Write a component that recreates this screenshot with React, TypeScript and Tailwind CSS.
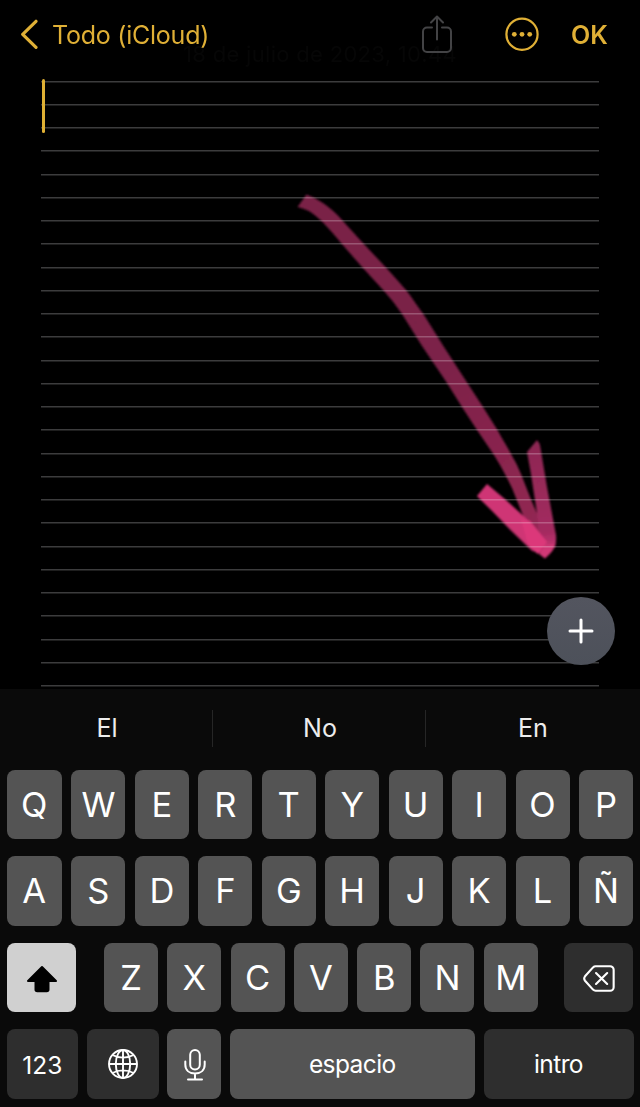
import React from "react";
import clsx from "clsx";

const ruledLines = Array.from({ length: 27 });
const topRow = ["Q", "W", "E", "R", "T", "Y", "U", "I", "O", "P"];
const middleRow = ["A", "S", "D", "F", "G", "H", "J", "K", "L", "Ñ"];
const bottomRow = ["Z", "X", "C", "V", "B", "N", "M"];

const ShareIcon = () => (
  <svg width="30" height="38" viewBox="0 0 30 38" fill="none" stroke="#434345" strokeWidth="2" strokeLinecap="round" strokeLinejoin="round">
    <path d="M10 12.500H5A4 4 0 0 0 1 16.500V33A4 4 0 0 0 5 37H25A4 4 0 0 0 29 33V16.500A4 4 0 0 0 25 12.500H20" />
    <path d="M15 24.500V2M9 7.500L15 1.500L21 7.500" />
  </svg>
);

const MoreIcon = () => (
  <svg width="34" height="34" viewBox="0 0 34 34" fill="none">
    <circle cx="17" cy="17.300" r="15.600" stroke="#e0b036" strokeWidth="2.200" />
    <g fill="#e0b036">
      <circle cx="9.300" cy="17.300" r="2.400" />
      <circle cx="17" cy="17.300" r="2.400" />
      <circle cx="24.700" cy="17.300" r="2.400" />
    </g>
  </svg>
);

const GlobeIcon = () => (
  <svg width="30" height="30" viewBox="0 0 30 30" fill="none" stroke="#fff" strokeWidth="1.900">
    <circle cx="15" cy="15" r="14" />
    <ellipse cx="15" cy="15" rx="7.200" ry="14" />
    <path d="M15 1V29M1 15H29M4.500 6C10.500 9.500 19.500 9.500 25.500 6M4.500 24C10.500 20.500 19.500 20.500 25.500 24" />
  </svg>
);

const MicIcon = () => (
  <svg width="22" height="32" viewBox="0 0 22 32" fill="none" stroke="#fff" strokeWidth="2" strokeLinecap="round">
    <rect x="6.200" y="1" width="9.600" height="19.500" rx="4.800" />
    <path d="M1.300 12.500V15.500C1.300 21 5 24.500 11 24.500S20.700 21 20.700 15.500V12.500M11 24.500V30.500M4 30.500H18" />
  </svg>
);

const DeleteIcon = () => (
  <svg width="32" height="27" viewBox="0 0 33 28" fill="none" stroke="#fff" strokeWidth="2.200" strokeLinecap="round" strokeLinejoin="round">
    <path d="M13 1.300H28A3.700 3.700 0 0 1 31.700 5V23A3.700 3.700 0 0 1 28 26.700H13Q11.500 26.700 10.300 25.500L2 16.300Q0.300 14 2 11.700L10.300 2.500Q11.500 1.300 13 1.300Z" />
    <path d="M13.400 8.300L25 19.700M25 8.300L13.400 19.700" />
  </svg>
);

const ShiftIcon = () => (
  <svg width="32" height="28" viewBox="0 0 32 28">
    <path
      d="M16 2L30 16H22.500V24.500Q22.500 26.200 20.800 26.200H11.200Q9.500 26.200 9.500 24.500V16H2Z"
      fill="#000"
      stroke="#000"
      strokeWidth="2"
      strokeLinejoin="round"
    />
  </svg>
);

// marker strokes, each one overlaps the previous near the tip
const MarkerArrow = () => (
  <svg className="pointer-events-none absolute left-0 top-0 mix-blend-screen" width="640" height="689" viewBox="0 0 640 689">
    <defs>
      <linearGradient id="shaft" x1="300" y1="200" x2="540" y2="540" gradientUnits="userSpaceOnUse">
        <stop offset="0" stopColor="#7a2046" />
        <stop offset="0.500" stopColor="#7b2048" />
        <stop offset="1" stopColor="#942853" />
      </linearGradient>
      <linearGradient id="barb" x1="535" y1="442" x2="548" y2="555" gradientUnits="userSpaceOnUse">
        <stop offset="0" stopColor="#8c2752" />
        <stop offset="0.800" stopColor="#a42b60" />
        <stop offset="1" stopColor="#d2367a" />
      </linearGradient>
      <filter id="soft">
        <feGaussianBlur stdDeviation="0.900" />
      </filter>
    </defs>
    <g filter="url(#soft)">
      <path
        d="M297.500 207L306.500 194.500Q315 197.500 323 203C330 208 336 213 342 220L362 242L385 266.500C393 275 399 282 406 290C413 299 418 307 424 315L444 347L468 384L483 407L498 431C502 439 507 446 511 454Q517 464 521 474L530 497L542 525L547 545L537 545L522 513L516 498Q512 487 507 478Q501 466 494 455L477 430L462 407L447 383L422 346L402 314Q394 302 384 291L362 267L341 243C333 233 325 224 317 217Q308 209 297.500 207Z"
        fill="url(#shaft)"
      />
      <path
        d="M527 452L537 440Q540 443 540.500 448L547 487L556 535Q556.500 542 555 547L545 558L540 554L538 520L531 474Z"
        fill="url(#barb)"
      />
      <path d="M477 496L495 502L545 548L540 553L532 551L510 530L492 511Z" fill="#9c2b5b" />
      <path d="M477 496L487 484L506 500L529 521L547 542L538 554L526 544L509 527Z" fill="#cf3474" />
      <path d="M521 520L530 521L547 542L538 554L528 545Z" fill="#dc397a" />
      <path d="M545 545L555 544Q555 550 545 558.500L539 554Z" fill="#d03876" />
    </g>
  </svg>
);

type KeyProps = {
  children: React.ReactNode;
  className?: string;
};

const Key = ({ children, className }: KeyProps) => (
  <button
    className={clsx(
      "flex h-[69.5px] shrink-0 items-center justify-center rounded-lg font-normal text-white",
      className
    )}
  >
    {children}
  </button>
);

const LetterKey = ({ letter, wide }: { letter: string; wide?: boolean }) => (
  <Key className={clsx("bg-[#545454] text-[34.5px]", wide ? "w-[55.5px]" : "w-[54px]")}>
    <span>{letter}</span>
  </Key>
);

const App = () => {
  return (
    <div className="relative flex h-[1107px] w-[640px] flex-col overflow-hidden bg-black font-['Inter',sans-serif]">
      <section className="relative isolate h-[689px] shrink-0">
        <header className="flex h-[68px] items-center pl-5 pr-8 text-[#e0b036]">
          <svg width="19" height="30" viewBox="0 0 19 30" fill="none" stroke="currentColor" strokeWidth="3.200" strokeLinecap="round" strokeLinejoin="round">
            <path d="M16 2.300L2.700 15.300L16 28.300" />
          </svg>
          <h1 className="ml-[13px] whitespace-nowrap pt-0.5 text-[25px] leading-none tracking-[-0.24px]">Todo (iCloud)</h1>
          <div className="ml-auto flex items-center">
            <ShareIcon />
            <div className="ml-[53px]">
              <MoreIcon />
            </div>
            <button className="ml-8 w-[37px] pt-0.5 text-[25px] font-semibold leading-none">OK</button>
          </div>
        </header>
        <p className="absolute left-0 top-[42px] -z-10 w-full text-center text-[22px] leading-6 tracking-[0.3px] text-[#060606]">
          18 de julio de 2023, 10:44
        </p>
        <div className="ml-[41px] mt-[12.5px] w-[557.5px]">
          {ruledLines.map((_, i) => (
            <div key={i} className="h-[23.25px]">
              <svg className="block" width="558" height="3" viewBox="0 0 558 3">
                <rect width="558" height="1.500" fill="#3c3c3d" />
              </svg>
            </div>
          ))}
        </div>
        <div className="absolute left-[42px] top-[79px] h-[54px] w-[3px] rounded-full bg-[#dfb034]" />
        <MarkerArrow />
        <button className="absolute left-[547px] top-[597px] flex size-[68px] items-center justify-center rounded-full bg-linear-to-b from-[#53555f] to-[#4d515a]">
          <svg width="26" height="26" viewBox="0 0 26 26" stroke="#fff" strokeWidth="3" strokeLinecap="round">
            <path d="M13 2V24M2 13H24" />
          </svg>
        </button>
      </section>

      <section className="h-[418px] shrink-0 bg-[#0a0a0a]">
        <div className="flex h-[80.5px] items-center pb-0.5 text-[25px] text-[#ededed]">
          <span className="w-[212px] pl-0.5 text-center">El</span>
          <span className="h-[37px] w-px bg-[#262626]" />
          <span className="w-[212px] pl-0.5 text-center">No</span>
          <span className="h-[37px] w-px bg-[#262626]" />
          <span className="flex-1 text-center">En</span>
        </div>
        <div className="flex flex-col gap-[17px] pl-[6.5px] pr-[7px] pt-[0.3px]">
          <div className="flex justify-between">
            {topRow.map((letter, i) => (
              <LetterKey key={letter} letter={letter} wide={i === 0} />
            ))}
          </div>
          <div className="flex justify-between">
            {middleRow.map((letter, i) => (
              <LetterKey key={letter} letter={letter} wide={i === 0} />
            ))}
          </div>
          <div className="flex">
            <Key className="w-[69.5px] bg-[#d0d0d0] pl-0.5 pt-0.5">
              <ShiftIcon />
            </Key>
            <div className="ml-7 flex gap-[9.3px]">
              {bottomRow.map((letter) => (
                <LetterKey key={letter} letter={letter} />
              ))}
            </div>
            <Key className="ml-auto w-[69.5px] bg-[#2e2e2e] pl-0.5 pt-0.5">
              <DeleteIcon />
            </Key>
          </div>
          <div className="flex text-[24.5px] tracking-[-0.6px]">
            <Key className="w-[71.5px] bg-[#2e2e2e] pt-0.5 tracking-normal">123</Key>
            <Key className="ml-[9px] w-[72px] bg-[#2e2e2e]">
              <GlobeIcon />
            </Key>
            <Key className="ml-2 w-[54px] bg-[#545454] pl-px pt-0.5">
              <MicIcon />
            </Key>
            <Key className="ml-[9px] w-[244.5px] bg-[#545454] pt-px">espacio</Key>
            <Key className="ml-[9px] w-[150px] bg-[#2e2e2e] pt-px">intro</Key>
          </div>
        </div>
      </section>
    </div>
  );
};

export default App;
